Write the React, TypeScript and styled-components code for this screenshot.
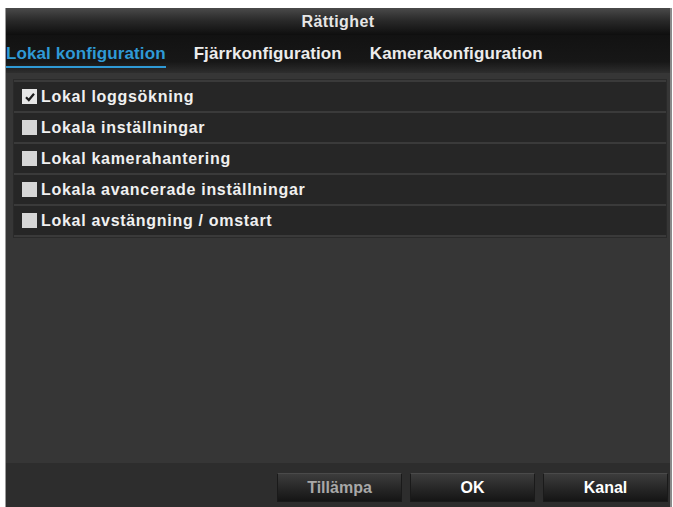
import React, { useState } from 'react';
import styled, { createGlobalStyle } from 'styled-components';

const GlobalStyle = createGlobalStyle`
  body {
    margin: 0;
    background: #ffffff;
    font-family: "Liberation Sans", Arial, sans-serif;
  }
`;

const tabs = ['Lokal konfiguration', 'Fjärrkonfiguration', 'Kamerakonfiguration'];

const permissions = [
  'Lokal loggsökning',
  'Lokala inställningar',
  'Lokal kamerahantering',
  'Lokala avancerade inställningar',
  'Lokal avstängning / omstart',
];

function App() {
  const [activeTab, setActiveTab] = useState(0);
  const [checked, setChecked] = useState<boolean[]>([true, false, false, false, false]);

  function toggle(index: number) {
    setChecked(checked.map((c, i) => (i === index ? !c : c)));
  }

  return (
    <>
      <GlobalStyle />
      <Dialog>
        <TitleBar>Rättighet</TitleBar>
        <TabBar>
          {tabs.map((tab, index) => (
            <Tab key={tab} $active={index === activeTab} onClick={() => setActiveTab(index)}>
              {tab}
            </Tab>
          ))}
        </TabBar>
        <Content>
          <List>
            {permissions.map((label, index) => (
              <Row key={label} onClick={() => toggle(index)}>
                <Checkbox $checked={checked[index]}>
                  {checked[index] ? (
                    <svg width="12" height="12" viewBox="0 0 12 12">
                      <path d="M2 6.2 L4.8 9 L10 2.8" stroke="#1c1c1c" strokeWidth="2.2" fill="none" />
                    </svg>
                  ) : null}
                </Checkbox>
                <RowLabel>{label}</RowLabel>
              </Row>
            ))}
          </List>
        </Content>
        <Footer>
          <Button $disabled>Tillämpa</Button>
          <Button>OK</Button>
          <Button>Kanal</Button>
        </Footer>
      </Dialog>
    </>
  );
}

const Dialog = styled.div`
  margin: 8px 0 0 5px;
  width: 667px;
  height: 499px;
  display: flex;
  flex-direction: column;
  background: #363636;
  border-left: 1px solid #9a9a9a;
  border-right: 2px solid #8a8a8a;
  box-sizing: border-box;
  overflow: hidden;
`;

const TitleBar = styled.div`
  height: 27px;
  flex: 0 0 27px;
  display: flex;
  align-items: center;
  justify-content: center;
  background: linear-gradient(180deg, #4a4a4a 0%, #2a2a2a 45%, #0e0e0e 100%);
  color: #e6e6e6;
  font-size: 16px;
  font-weight: bold;
  letter-spacing: 0.4px;
`;

const TabBar = styled.div`
  height: 38px;
  flex: 0 0 38px;
  display: flex;
  align-items: flex-start;
  padding: 9px 0 0 0;
  gap: 28px;
  box-sizing: border-box;
  background: linear-gradient(180deg, #121212 0%, #171717 70%, #232323 86%, #2e2e2e 100%);
`;

const Tab = styled.div<{ $active?: boolean }>`
  font-size: 17px;
  font-weight: bold;
  letter-spacing: 0.1px;
  padding-bottom: 2px;
  color: ${(p) => (p.$active ? '#2f9ad6' : '#ececec')};
  border-bottom: 2px solid ${(p) => (p.$active ? '#2f9ad6' : 'transparent')};
  cursor: pointer;
`;

const Content = styled.div`
  flex: 1;
  padding: 6px 3px 0 7px;
  background: #363636;
`;

const List = styled.div`
  display: flex;
  flex-direction: column;
  gap: 2px;
  padding: 2px 0;
  background: #3a3a3a;
  border: 1px solid #2a2a2a;
`;

const Row = styled.div`
  height: 29px;
  display: flex;
  align-items: center;
  padding-left: 8px;
  background: #262626;
  cursor: pointer;
`;

const Checkbox = styled.div<{ $checked?: boolean }>`
  width: 15px;
  height: 15px;
  margin-right: 4px;
  display: flex;
  align-items: center;
  justify-content: center;
  background: ${(p) => (p.$checked ? '#e6e6e6' : '#d6d6d6')};
`;

const RowLabel = styled.span`
  color: #f0f0f0;
  font-size: 16px;
  font-weight: bold;
  letter-spacing: 0.7px;
`;

const Footer = styled.div`
  height: 44px;
  flex: 0 0 44px;
  display: flex;
  justify-content: flex-end;
  align-items: flex-start;
  gap: 8px;
  padding: 10px 2px 0 0;
  box-sizing: border-box;
  background: #2d2d2d;
`;

const Button = styled.div<{ $disabled?: boolean }>`
  width: 125px;
  height: 29px;
  display: flex;
  align-items: center;
  justify-content: center;
  box-sizing: border-box;
  border: 1px solid #1a1a1a;
  border-top-color: #4a4a4a;
  background: linear-gradient(180deg, #3c3c3c 0%, #2a2a2a 45%, #151515 100%);
  color: ${(p) => (p.$disabled ? '#a8a8a8' : '#ffffff')};
  font-size: 16px;
  font-weight: bold;
  cursor: pointer;
`;

export default App;
